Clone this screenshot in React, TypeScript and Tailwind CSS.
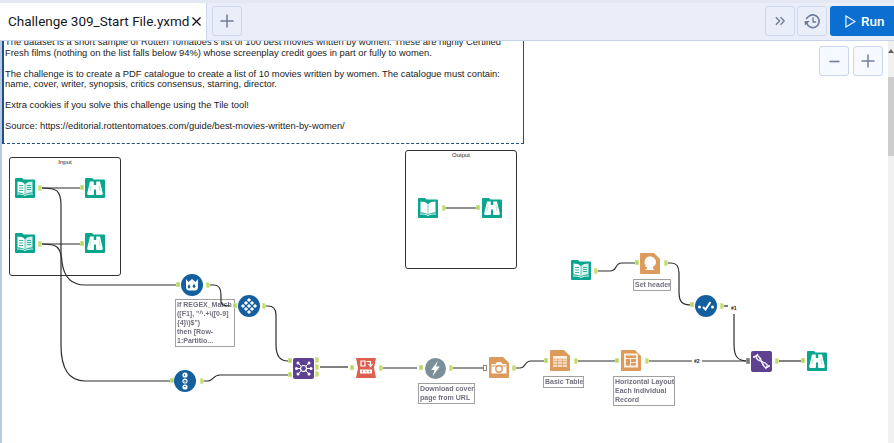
import React from "react";

const TEAL = "#0aa58f";
const ORANGE = "#dc9a5c";
const BLUE = "#14609f";
const PURPLE = "#5f4191";

const Folder = ({ children }: { children: React.ReactNode }) => (
  <svg viewBox="0 0 20 20" className="w-full h-full">
    <path d="M1 0H7L8.500 1.500H19a1 1 0 0 1 1 1V19a1 1 0 0 1-1 1H1a1 1 0 0 1-1-1V1a1 1 0 0 1 1-1Z" fill={TEAL} />
    {children}
  </svg>
);

const Book = ({ lined }: { lined?: boolean }) => (
  <Folder>
    <path d="M2.500 3.500C5.500 3.500 8 4.200 9.700 6V16.500C8 15 5.500 14.500 2.500 14.500Z" fill="#fff" />
    <path d="M17.500 3.500C14.500 3.500 12 4.200 10.300 6V16.500C12 15 14.500 14.500 17.500 14.500Z" fill={lined ? "#d6f0eb" : "#fff"} />
    {lined && <path d="M12 7.500H16M12 9.500H16M12 11.500H16M4 7.500H8M4 10H8M4 12.500H8" stroke={TEAL} strokeWidth="0.800" />}
    <path d="M2 16C5 16 8 16.200 10 17.500C12 16.200 15 16 18 16" stroke="#fff" strokeWidth="0.900" fill="none" />
  </Folder>
);

const Binoc = () => (
  <Folder>
    <path d="M5 3.500H8.800V7H11.200V3.500H15L17.800 15.500C17.800 16.500 17 17 16 17H12.500C11.500 17 11 16.500 11 15.500V11.500H9V15.500C9 16.500 8.500 17 7.500 17H4C3 17 2.200 16.500 2.200 15.500Z" fill="#fff" />
    <path d="M6 7.500L5 13M14 7.500L15 13" stroke="#bfe7df" strokeWidth="1.200" />
  </Folder>
);

const Circle = ({ children, fill = BLUE }: { children: React.ReactNode; fill?: string }) => (
  <svg viewBox="0 0 22 22" className="w-full h-full">
    <circle cx="11" cy="11" r="11" fill={fill} />
    {children}
  </svg>
);

const Doc = ({ children }: { children: React.ReactNode }) => (
  <svg viewBox="0 0 20 21" className="w-full h-full">
    <path d="M1 0H14L20 6V20a1 1 0 0 1-1 1H1a1 1 0 0 1-1-1V1a1 1 0 0 1 1-1Z" fill={ORANGE} />
    {children}
  </svg>
);

const Purple = ({ children }: { children: React.ReactNode }) => (
  <svg viewBox="0 0 21 21" className="w-full h-full">
    <rect width="21" height="21" rx="2" fill={PURPLE} />
    {children}
  </svg>
);

const icons: Record<string, React.ReactNode> = {
  book: <Book lined />,
  bookOpen: <Book />,
  binoc: <Binoc />,
  crown: (
    <Circle>
      <path d="M5 5V13.500C5 15.500 6.500 16.500 8 16.500H14C15.500 16.500 17 15.500 17 13.500V5L14.500 8L11 5L7.500 8Z" fill="#fff" />
      <path d="M8 10L9.500 13L8 14.800L6.500 13ZM13 9.500L14.700 12.500L13 14.300L11.500 12.500Z" fill={BLUE} />
    </Circle>
  ),
  grid: (
    <Circle>
      {[
        [11, 5], [8, 8], [14, 8], [5, 11], [11, 11], [17, 11], [8, 14], [14, 14], [11, 17],
      ].map(([x, y]) => (
        <rect key={`${x}-${y}`} x={x - 1.500} y={y - 1.500} width="3" height="3" transform={`rotate(45 ${x} ${y})`} fill="#fff" />
      ))}
    </Circle>
  ),
  stack: (
    <Circle>
      {[5, 11, 17].map((y) => (
        <circle key={y} cx="11" cy={y} r="2.600" fill="#fff" />
      ))}
      <path d="M10.500 4V6M10 10.500H12V12H10ZM10 16.500H12" stroke={BLUE} strokeWidth="0.800" fill="none" />
    </Circle>
  ),
  check: (
    <Circle>
      <circle cx="4.500" cy="12" r="1.500" fill="#fff" />
      <circle cx="17.500" cy="12" r="1.500" fill="#fff" />
      <path d="M8 12L10.500 14.500L15.500 7" stroke="#fff" strokeWidth="2" fill="none" />
    </Circle>
  ),
  bolt: (
    <Circle fill="#7b8f98">
      <path d="M13.500 3L6.500 12.500H10L8 19L15.500 9H11.500Z" fill="#fff" />
    </Circle>
  ),
  join: (
    <Purple>
      <g stroke="#fff" strokeWidth="1">
        <path d="M10.500 10.500L5 5M10.500 10.500L16 5M10.500 10.500L3.500 10.500M10.500 10.500L18 10.500M10.500 10.500L5 16M10.500 10.500L16 16" />
      </g>
      <circle cx="10.500" cy="10.500" r="3" fill={PURPLE} stroke="#fff" strokeWidth="1.200" />
      {[[5, 5], [16, 5], [3.500, 10.500], [18, 10.500], [5, 16], [16, 16]].map(([x, y]) => (
        <circle key={`${x}${y}`} cx={x} cy={y} r="1.500" fill="#fff" />
      ))}
    </Purple>
  ),
  dna: (
    <Purple>
      <path d="M3 6C6 3 9 5 10.500 10.500S15 18 18 15" stroke="#fff" strokeWidth="1.200" fill="none" />
      <path d="M7 3C3.500 6 5 9 10.500 10.500S18 14 14.500 18" stroke="#fff" strokeWidth="1.200" fill="none" />
      <path d="M5.500 5.500L6.500 8M8 6L9 9M12 12L13 15M14 11.500L15.500 14" stroke="#e4dcef" strokeWidth="0.900" />
      <circle cx="3" cy="6" r="1" fill="#fff" />
      <circle cx="18" cy="15" r="1" fill="#fff" />
    </Purple>
  ),
  red: (
    <svg viewBox="0 0 20 20" className="w-full h-full">
      <path d="M0 0H20L18 10L20 20H0L2 10Z" fill="#dd5f50" />
      <path d="M5 3H9V8H5ZM10.500 3.500H14.500V8M12.500 6L14.500 8.500L16.500 6" stroke="#fff" strokeWidth="1.200" fill="none" />
      <rect x="4" y="11.500" width="12" height="4" fill="#fff" />
      <path d="M6 13.500H7M9.500 13.500H10.500M13 13.500H14" stroke="#dd5f50" strokeWidth="1.500" />
    </svg>
  ),
  camera: (
    <Doc>
      <path d="M2.500 7H6.500L8 5H12L13.500 7H17.500V16.500H2.500Z" fill="#fff" />
      <rect x="2.500" y="8.500" width="15" height="1" fill={ORANGE} />
      <circle cx="10" cy="12" r="3.200" fill="#fff" stroke={ORANGE} strokeWidth="1.400" />
    </Doc>
  ),
  table: (
    <Doc>
      <rect x="3" y="6" width="14" height="11" fill="#f6dcc4" />
      <path d="M3 9H17M3 11.700H17M3 14.400H17M7.500 9V17M12.500 9V17" stroke={ORANGE} strokeWidth="0.700" />
      <rect x="3" y="6" width="14" height="2.500" fill="#fbeee2" />
    </Doc>
  ),
  layout: (
    <Doc>
      <rect x="3" y="3.500" width="14" height="14" fill="#fbeee2" />
      <rect x="5" y="5.500" width="10" height="2.500" fill={ORANGE} />
      <rect x="5" y="9" width="4" height="6.500" fill={ORANGE} />
      <rect x="10" y="9" width="5" height="3" fill={ORANGE} />
      <rect x="10" y="13" width="5" height="2.500" fill={ORANGE} />
    </Doc>
  ),
  head: (
    <Doc>
      <path d="M10 3.500C13.500 3.500 16 6 16 9C16 11.500 14.500 13 13 13.500V15.500L14.500 17H5L7 15.500V14H5.500V11.500L4.500 10.500C4.500 6 6.500 3.500 10 3.500Z" fill="#fff" />
    </Doc>
  ),
};

const nodes = [
  { i: "book", x: 15, y: 178, w: 20, h: 20 },
  { i: "binoc", x: 85, y: 178, w: 20, h: 20 },
  { i: "book", x: 15, y: 233, w: 20, h: 20 },
  { i: "binoc", x: 85, y: 233, w: 20, h: 20 },
  { i: "bookOpen", x: 418, y: 198, w: 20, h: 20 },
  { i: "binoc", x: 482, y: 198, w: 20, h: 20 },
  { i: "crown", x: 181, y: 274, w: 22, h: 22 },
  { i: "grid", x: 238, y: 295, w: 22, h: 22 },
  { i: "stack", x: 174, y: 370, w: 22, h: 22 },
  { i: "join", x: 293, y: 358, w: 21, h: 21 },
  { i: "red", x: 356, y: 358, w: 20, h: 20 },
  { i: "bolt", x: 425, y: 358, w: 21, h: 21 },
  { i: "camera", x: 489, y: 357, w: 20, h: 21 },
  { i: "table", x: 550, y: 350, w: 20, h: 21 },
  { i: "layout", x: 621, y: 350, w: 20, h: 21 },
  { i: "book", x: 571, y: 260, w: 20, h: 20 },
  { i: "head", x: 640, y: 253, w: 20, h: 21 },
  { i: "check", x: 695, y: 295, w: 22, h: 22 },
  { i: "dna", x: 751, y: 351, w: 21, h: 21 },
  { i: "binoc", x: 807, y: 351, w: 20, h: 20 },
];

const wires = [
  "M42 188H80",
  "M42 244H80",
  "M42 188C56 188 61 190 61 205V345C61 370 70 381 85 381H170",
  "M42 244C56 244 61 246 62 262C64 278 72 285 85 285H177",
  "M207 285H214C219 285 221 288 221 295V302C221 305 224 306 230 306",
  "M262 306H268C274 306 276 309 276 315V345C276 356 280 361 288 361",
  "M200 381H208C213 381 213 375 220 375H288",
  "M320 367H348",
  "M380 368H417",
  "M450 368H484",
  "M512 368H520C526 368 524 361 531 361H545",
  "M575 361H616",
  "M646 361H692M702 361H748",
  "M596 271H610C618 271 614 263 622 263H636",
  "M666 263H671C677 263 679 267 679 273V292C679 302 682 305 692 305",
  "M721 306H728",
  "M734 314V344C734 356 737 361 748 361",
  "M776 361H802",
];

const anchors: { x: number; y: number; k: "in" | "out" | "hollow" | "gray" }[] = [
  { x: 38, y: 188, k: "out" }, { x: 80, y: 188, k: "in" },
  { x: 38, y: 244, k: "out" }, { x: 80, y: 244, k: "in" },
  { x: 442, y: 208, k: "out" }, { x: 476, y: 208, k: "in" },
  { x: 176, y: 285, k: "in" }, { x: 206, y: 285, k: "out" },
  { x: 233, y: 306, k: "in" }, { x: 262, y: 306, k: "out" },
  { x: 170, y: 381, k: "in" }, { x: 200, y: 381, k: "out" },
  { x: 288, y: 361, k: "in" }, { x: 288, y: 375, k: "in" },
  { x: 315, y: 360, k: "out" }, { x: 315, y: 367, k: "out" }, { x: 315, y: 374, k: "out" },
  { x: 350, y: 368, k: "in" }, { x: 379, y: 368, k: "out" },
  { x: 419, y: 368, k: "in" }, { x: 449, y: 368, k: "out" },
  { x: 483, y: 368, k: "hollow" }, { x: 512, y: 368, k: "out" },
  { x: 544, y: 361, k: "in" }, { x: 574, y: 361, k: "out" },
  { x: 615, y: 361, k: "in" }, { x: 645, y: 361, k: "out" },
  { x: 594, y: 271, k: "out" }, { x: 635, y: 263, k: "in" },
  { x: 664, y: 263, k: "out" }, { x: 690, y: 305, k: "in" },
  { x: 720, y: 306, k: "out" }, { x: 746, y: 361, k: "gray" },
  { x: 775, y: 361, k: "out" }, { x: 801, y: 361, k: "in" },
];

const notes = [
  { x: 175, y: 299, w: 60, h: 48, lines: ["If REGEX_Match", "([F1], \"^.+\\([0-9]", "{4}\\)$\")", "then [Row-", "1:Partitio..."] },
  { x: 418, y: 383, w: 57, h: 21, lines: ["Download cover", "page from URL"] },
  { x: 543, y: 376, w: 41, h: 12, lines: ["Basic Table"] },
  { x: 613, y: 376, w: 62, h: 30, lines: ["Horizontal Layout", "Each Individual", "Record"] },
  { x: 633, y: 279, w: 38, h: 12, lines: ["Set header"] },
];

const place = (x: number, y: number, w?: number, h?: number): React.CSSProperties => ({
  left: x,
  top: y - 41,
  width: w,
  height: h,
});

const ToolBtn = ({ children }: { children: React.ReactNode }) => (
  <button className="w-[30px] h-[30px] flex items-center justify-center rounded-[3px] border border-[#cdd8ec] text-[#6f7c99]">
    {children}
  </button>
);

const ZoomBtn = ({ children }: { children: React.ReactNode }) => (
  <button className="w-[30px] h-[30px] flex items-center justify-center rounded-[3px] border border-[#c9d6ec] bg-[#f6f9ff] text-[#74809c]">
    {children}
  </button>
);

export default function App() {
  return (
    <div className="w-[894px] h-[443px] flex flex-col overflow-hidden bg-white font-['Liberation_Sans',sans-serif]">
      <header className="h-[41px] shrink-0 flex items-stretch bg-[#e9eef9] border-t-[3px] border-b border-t-[#e4e8f2] border-b-[#c5d3e8]">
        <div className="w-[207px] flex items-center justify-between pl-2 pr-[4px] bg-white border-r border-[#cfd8ea]">
          <span className="font-['Roboto',sans-serif] text-[13.500px] text-[#15181f] whitespace-nowrap">Challenge 309_Start File.yxmd</span>
          <svg viewBox="0 0 10 10" className="w-[9px] h-[9px] shrink-0 mr-[1px]">
            <path d="M0.500 0.500L9.500 9.500M9.500 0.500L0.500 9.500" stroke="#111" strokeWidth="1.400" />
          </svg>
        </div>
        <div className="ml-[5px] mt-[3px]">
          <ToolBtn>
            <svg viewBox="0 0 14 14" className="w-[14px] h-[14px]">
              <path d="M7 0.500V13.500M0.500 7H13.500" stroke="currentColor" strokeWidth="1.500" />
            </svg>
          </ToolBtn>
        </div>
        <div className="ml-auto flex items-start mt-[3px] gap-[2px]">
          <ToolBtn>
            <svg viewBox="0 0 12 10" className="w-[11px] h-[10px]">
              <path d="M1 1L5 5L1 9M6 1L10 5L6 9" stroke="currentColor" strokeWidth="1.500" fill="none" />
            </svg>
          </ToolBtn>
          <ToolBtn>
            <svg viewBox="0 0 16 16" className="w-[17px] h-[17px]">
              <path d="M2.500 9.500A6 6 0 1 0 4 3.500L2 5.500" stroke="currentColor" strokeWidth="1.500" fill="none" />
              <path d="M0.500 7.500H5.500L0.800 11.800Z" fill="currentColor" />
              <path d="M8.500 4V8.500H11.500" stroke="currentColor" strokeWidth="1.300" fill="none" />
            </svg>
          </ToolBtn>
          <button className="ml-[1px] w-[64px] h-[30px] bg-[#0b6fd1] rounded-l-[3px] flex items-center pl-[15px] gap-[5px] text-white">
            <svg viewBox="0 0 12 14" className="w-[11px] h-[13px]">
              <path d="M1 1L11 7L1 13Z" stroke="#fff" strokeWidth="1.200" fill="none" />
            </svg>
            <span className="font-['Roboto',sans-serif] text-[13.500px] font-medium">Run</span>
          </button>
        </div>
      </header>

      <main className="relative flex-1 overflow-hidden bg-white border-l-2 border-[#b8c9e8]">
        <div className="absolute -left-[2px] top-0 w-[894px] h-[402px]">
          {/* Comment */}
          <div
            className="absolute bg-white border-l-2 border-r border-b border-[#20507f] [border-bottom-style:dashed] overflow-hidden pl-[1px] pt-[1px] text-[9.400px] leading-[10.500px] text-[#222] whitespace-nowrap"
            style={place(2, 36, 522, 108)}
          >
            <p>The dataset is a short sample of Rotten Tomatoes's list of 100 best movies written by women. These are highly Certified</p>
            <p>Fresh films (nothing on the list falls below 94%) whose screenplay credit goes in part or fully to women.</p>
            <p className="mt-[10.500px]">The challenge is to create a PDF catalogue to create a list of 10 movies written by women. The catalogue must contain:</p>
            <p>name, cover, writer, synopsis, critics consensus, starring, director.</p>
            <p className="mt-[10.500px]">Extra cookies if you solve this challenge using the Tile tool!</p>
            <p className="mt-[10.500px]">Source: https://editorial.rottentomatoes.com/guide/best-movies-written-by-women/</p>
          </div>

          {/* Containers */}
          <div className="absolute rounded-[3px] border border-[#333] bg-white" style={place(9, 157, 112, 119)}>
            <p className="text-center text-[6px] leading-[8px] text-[#222]">Input</p>
          </div>
          <div className="absolute rounded-[3px] border border-[#333] bg-white" style={place(405, 150, 112, 119)}>
            <p className="text-center text-[6px] leading-[8px] text-[#222]">Output</p>
          </div>

          {/* Annotations */}
          {notes.map((n) => (
            <div
              key={n.lines[0]}
              className="absolute bg-white border border-[#a0a0a0] pl-[1px] text-[7px] leading-[9px] font-bold text-[#70707f] whitespace-nowrap overflow-hidden blur-[0.25px]"
              style={place(n.x, n.y, n.w, n.h)}
            >
              {n.lines.map((l) => (
                <p key={l}>{l}</p>
              ))}
            </div>
          ))}

          {/* Wires */}
          <svg className="absolute left-0 top-0" width="894" height="402" viewBox="0 41 894 402" fill="none">
            <path d="M444 208H476" stroke="#777" strokeWidth="1.600" />
            {wires.map((d) => (
              <path key={d} d={d} stroke="#2c2c2c" strokeWidth="1.200" />
            ))}
          </svg>

          {/* Tools */}
          {nodes.map((n, idx) => (
            <div key={idx} className="absolute blur-[0.3px]" style={place(n.x, n.y, n.w, n.h)}>
              {icons[n.i]}
            </div>
          ))}

          {/* Anchors */}
          {anchors.map((a, idx) => (
            <div
              key={idx}
              className={
                a.k === "out"
                  ? "absolute w-[4px] h-[6px] rounded-r-[2px] bg-[#c3de74] border border-[#d5e89a]"
                  : a.k === "in"
                  ? "absolute w-[4px] h-[5px] bg-[#b5d264] border border-[#cfe48f]"
                  : a.k === "hollow"
                  ? "absolute w-[4px] h-[6px] bg-white border border-[#888]"
                  : "absolute w-[4px] h-[6px] bg-[#777] border border-[#999]"
              }
              style={place(a.x, a.y - 3)}
            />
          ))}

          {/* Wire counts */}
          <span className="absolute text-[5px] leading-[6px] font-bold text-[#111] bg-white px-[1px]" style={place(730, 305)}>#1</span>
          <span className="absolute text-[5px] leading-[6px] font-bold text-[#111] bg-white px-[1px]" style={place(693, 358)}>#2</span>

          {/* Zoom controls */}
          <div className="absolute flex gap-[4px]" style={place(819, 46)}>
            <ZoomBtn>
              <svg viewBox="0 0 12 12" className="w-[11px] h-[11px]">
                <path d="M0.500 6H11.500" stroke="currentColor" strokeWidth="1.800" />
              </svg>
            </ZoomBtn>
            <ZoomBtn>
              <svg viewBox="0 0 14 14" className="w-[14px] h-[14px]">
                <path d="M7 0.500V13.500M0.500 7H13.500" stroke="currentColor" strokeWidth="1.500" />
              </svg>
            </ZoomBtn>
          </div>

          {/* Scrollbar */}
          <div className="absolute right-0 top-0 w-[6px] h-full bg-[#f0f0f0] flex flex-col items-center">
            <svg viewBox="0 0 6 4" className="w-[6px] h-[4px] mt-[8px]">
              <path d="M3 0L6 4H0Z" fill="#606060" />
            </svg>
            <div className="w-full h-[79px] mt-[24px] bg-[#cdcdcd]" />
          </div>
        </div>
      </main>
    </div>
  );
}
